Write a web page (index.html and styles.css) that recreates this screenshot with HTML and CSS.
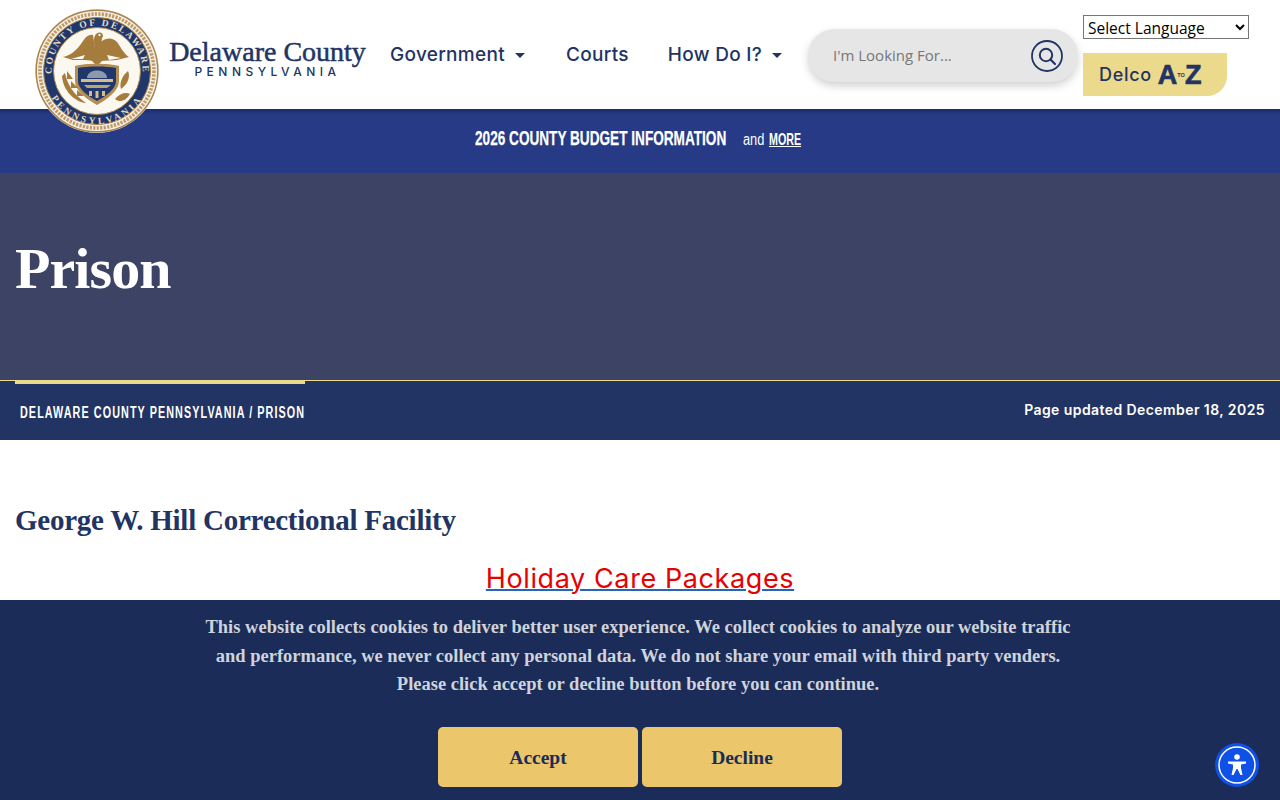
FILE: index.html
```html
<!DOCTYPE html>
<html lang="en">
<head>
<meta charset="utf-8">
<title>Prison - Delaware County</title>
<link rel="stylesheet" href="styles.css">
</head>
<body>
<header class="site-header">
  <a class="brand" href="#">
    <svg class="seal" viewBox="0 0 124 124" aria-hidden="true">
      <defs>
        <path id="sealTop" d="M62 107.500 A45.500 45.500 0 1 1 62.010 107.500"/>
        <path id="sealBottom" d="M62 9 A53 53 0 1 0 62.010 9"/>
      </defs>
      <circle cx="62" cy="62" r="62" fill="#e6e0d6"/>
      <circle cx="62" cy="62" r="60.800" fill="#f5efe3" stroke="#a9824a" stroke-width="1.400"/>
      <circle cx="62" cy="62" r="57" fill="none" stroke="#bd9a66" stroke-width="3.600" stroke-dasharray="2.200 1.300"/>
      <circle cx="62" cy="62" r="53.500" fill="#20376b" stroke="#a9824a" stroke-width="1"/>
      <circle cx="62" cy="62" r="43.500" fill="#fbf8f0" stroke="#a9824a" stroke-width="1"/>
      <text class="seal-text"><textPath href="#sealTop" startOffset="50%" text-anchor="middle">COUNTY OF DELAWARE</textPath></text>
      <text class="seal-text seal-text-low"><textPath href="#sealBottom" startOffset="50%" text-anchor="middle">PENNSYLVANIA</textPath></text>
      <path d="M28 48 C38 46 44 38 48 32 C51 27 55 25 58 26 L60 40 L60 52 L50 51 L38 51 Z" fill="#a67c3c"/>
      <path d="M66 33 C72 28 78 29 82 33 C86 38 88 44 94 48 L82 51 L66 52 Z" fill="#a67c3c"/>
      <path d="M59 31 C59 26 62 23 65 23.500 C68 24 69 27 67 29 L66 40 L66 52 L60 52 Z" fill="#a67c3c"/>
      <path d="M55 50 H69 L62 57 Z" fill="#a67c3c"/>
      <path d="M63.500 25 h2 v2 h-2 z" fill="#fbf8f0"/>
      <path d="M36 50 L50 46 L48 50 Z M72 46 L86 49 L74 51 Z" fill="#fbf8f0"/>
      <path d="M40 57 C50 54 74 54 84 57 L84 72 C84 82 72 90 62 96 C52 90 40 82 40 72 Z" fill="#b48d55"/>
      <path d="M43 59 C52 57 72 57 81 59 L81 72 C81 80 71 87 62 92 C53 87 43 80 43 72 Z" fill="#20376b"/>
      <path d="M52 69 C52 59 72 59 72 69 Z" fill="#8d99ad"/>
      <path d="M46 70 H78 V73 H46 Z" fill="#d3bd8c"/>
      <path d="M49 76 H76 L72 79 H52 Z" fill="#b9a377"/>
      <path d="M54 82 h3 v5 h-3 z M60.500 82 h3 v7 h-3 z M67 82 h3 v5 h-3 z" fill="#d3bd8c"/>
      <path d="M30 64 C32 75 39 86 51 94 C40 93 28 82 27 67 Z M32 62 L38 70 L32 70 Z M36 72 L43 79 L36 79 Z M42 81 L49 87 L42 87 Z" fill="#a67c3c"/>
      <path d="M93 62 C96 68 92 76 86 80 C84 73 88 66 93 62 Z M80 90 C85 84 91 83 95 85 C91 92 85 94 80 90 Z" fill="#a67c3c"/>
    </svg>
    <span class="wordmark">
      <span class="wordmark-name">Delaware County</span>
      <span class="wordmark-state">PENNSYLVANIA</span>
    </span>
  </a>
  <nav class="main-nav">
    <a class="nav-link caret" href="#">Government</a>
    <a class="nav-link nav-link-short" href="#">Courts</a>
    <a class="nav-link caret" href="#">How Do I?</a>
  </nav>
  <form class="search">
    <span class="search-text">I'm Looking For...</span>
    <span class="search-btn">
      <svg viewBox="0 0 32 32" width="32" height="32" aria-hidden="true">
        <circle cx="16" cy="16" r="15" fill="none" stroke="#223463" stroke-width="1.800"/>
        <circle cx="15" cy="15" r="6.200" fill="none" stroke="#223463" stroke-width="2"/>
        <path d="M19.500 19.500 L24 24" stroke="#223463" stroke-width="2.200" stroke-linecap="round"/>
      </svg>
    </span>
  </form>
  <div class="header-side">
    <select class="lang"><option>Select Language</option></select>
    <a class="az" href="#">
      <span class="az-delco">Delco</span>
      <span class="az-mark">A<span class="az-to">TO</span>Z</span>
    </a>
  </div>
</header>

<div class="alert-bar">
  <a class="alert-main" href="#"><span class="sq sq-main">2026 COUNTY BUDGET INFORMATION</span></a>
  <span class="alert-and"><span class="sq sq-and">and</span></span>
  <a class="alert-more" href="#"><span class="sq sq-more">MORE</span></a>
</div>

<section class="hero">
  <h1 class="hero-title">Prison</h1>
</section>

<div class="crumb-bar">
  <div class="crumbs"><span class="sq sq-crumbs">DELAWARE COUNTY PENNSYLVANIA / PRISON</span></div>
  <div class="updated">Page updated December 18, 2025</div>
</div>

<main class="content">
  <h2 class="content-title">George W. Hill Correctional Facility</h2>
  <p class="content-link"><a href="#"><span class="red">Holiday Care Packages</span></a></p>
</main>

<aside class="cookie">
  <p class="cookie-text">This website collects cookies to deliver better user experience. We collect cookies to analyze our website traffic<br>and performance, we never collect any personal data. We do not share your email with third party venders.<br>Please click accept or decline button before you can continue.</p>
  <div class="cookie-actions">
    <button class="cookie-btn" type="button">Accept</button>
    <button class="cookie-btn" type="button">Decline</button>
  </div>
</aside>

<button class="a11y" type="button" aria-label="Accessibility">
  <svg viewBox="0 0 44 44" width="44" height="44" aria-hidden="true">
    <circle cx="22" cy="22" r="18" fill="none" stroke="#fff" stroke-width="1.500"/>
    <circle cx="22" cy="14" r="2.800" fill="#fff"/>
    <path d="M13 18.500 H31 V20.500 L26 21.500 V25 L27.500 32 H25.500 L22.500 26 H21.500 L18.500 32 H16.500 L18 25 V21.500 L13 20.500 Z" fill="#fff"/>
  </svg>
</button>
</body>
</html>
```

FILE: styles.css
```css
* { box-sizing: border-box; }
html, body { margin: 0; padding: 0; }
body { font-family: Inter, "Liberation Sans", sans-serif; background: #fff; color: #223463; height: 800px; overflow: hidden; }
a { color: inherit; text-decoration: none; }

/* Condensed display type: no condensed family is installed, so the glyphs are narrowed */
.sq { display: inline-block; font-family: "Liberation Sans", sans-serif; white-space: nowrap; transform-origin: left center; }
.sq-main { font-size: 21px; font-weight: 700; transform: scaleX(.648); -webkit-text-stroke: 0.250px #fff; }
.sq-and { font-size: 16px; transform: scaleX(.8); }
.sq-more { font-size: 17px; font-weight: 700; text-decoration: underline; transform: scaleX(.63); }
.sq-crumbs { font-size: 16px; font-weight: 700; letter-spacing: 1.600px; transform: scaleX(.674); }

.site-header { position: relative; z-index: 2; height: 109px; display: flex; background: #fff; }
.brand { width: 380px; flex: none; display: block; position: relative; }
.seal { position: absolute; left: 35px; top: 9px; width: 124px; height: 124px; z-index: 3; }
.seal-text { font-family: "Liberation Serif", serif; font-size: 9.500px; font-weight: 700; letter-spacing: 2px; fill: #e3d9c0; }
.seal-text-low { letter-spacing: 3px; }
.wordmark { position: absolute; left: 169px; top: 37px; width: 197px; display: flex; flex-direction: column; align-items: center; }
.wordmark-name { font-family: "Liberation Serif", serif; font-size: 28px; line-height: 30px; font-weight: 400; color: #223463; white-space: nowrap; -webkit-text-stroke: 0.500px #223463; }
.wordmark-state { font-size: 12px; line-height: 10px; font-weight: 500; letter-spacing: 4.500px; color: #223463; }

.main-nav { width: 428px; flex: none; display: flex; align-items: flex-start; padding-left: 10px; padding-top: 43px; }
.nav-link { font-size: 19px; line-height: 24px; font-weight: 500; color: #223463; margin-right: 41px; white-space: nowrap; letter-spacing: 0.300px; }
.nav-link-short { margin-right: 39px; }
.caret::after { content: ""; display: inline-block; margin-left: 10px; vertical-align: 3px; border-top: 5px solid #223463; border-left: 5px solid transparent; border-right: 5px solid transparent; }

.search { flex: none; width: 270px; height: 53px; margin-top: 29px; border-radius: 27px; background: #e6e6e6; box-shadow: 0 4px 8px rgba(0,0,0,.18); display: flex; align-items: center; justify-content: space-between; padding: 0 15px 0 25px; }
.search-text { font-family: "Open Sans", sans-serif; font-size: 15px; color: #777; margin-bottom: 2px; }
.search-btn { display: flex; }

.header-side { flex: none; width: 170px; margin-left: 5px; padding-top: 15px; display: flex; flex-direction: column; align-items: flex-start; }
.lang { width: 166px; height: 24px; font-family: "Open Sans", sans-serif; font-size: 15.500px; background: #fff; color: #000; border: 1px solid #767676; padding: 0; }
.az { width: 144px; height: 43px; margin-top: 14px; background: #ecda8c; border-bottom-right-radius: 20px; display: flex; align-items: center; padding-left: 16px; gap: 6px; }
.az-delco { font-size: 18px; font-weight: 500; letter-spacing: 0.700px; color: #223463; }
.az-mark { font-family: "Liberation Sans", sans-serif; font-size: 27px; line-height: 30px; font-weight: 700; color: #223463; display: flex; align-items: center; -webkit-text-stroke: 0.700px #223463; }
.az-to { font-size: 5.500px; line-height: 8px; -webkit-text-stroke: 0; color: #223463; }

.alert-bar { height: 64px; background: linear-gradient(#1c2c66, #263a85 5px); color: #fff; display: flex; align-items: center; justify-content: center; padding: 0 4px 6px 0; }
.alert-main { width: 251px; flex: none; }
.alert-and { width: 21px; flex: none; margin-left: 17px; margin-top: 2px; }
.alert-more { width: 32px; flex: none; margin-left: 5px; margin-top: 2px; }

.hero { height: 207px; background: #3c4365; padding: 60px 15px 0; }
.hero-title { margin: 0; font-family: "Liberation Serif", serif; font-size: 58px; line-height: 72px; font-weight: 700; color: #fff; letter-spacing: -0.900px; }

.crumb-bar { height: 60px; background: #223463; border-top: 1px solid #ecda8c; display: flex; justify-content: space-between; padding: 0 15px; color: #fff; }
.crumbs { margin-top: -1px; height: 61px; border-top: 4px solid #ecda8c; width: 290px; padding: 19px 0 0 5px; line-height: 18px; }
.updated { font-size: 14px; line-height: 18px; font-weight: 600; letter-spacing: 0.420px; padding-top: 20px; }

.content { padding: 60px 15px 0; }
.content-title { margin: 0; font-family: "Liberation Serif", serif; font-size: 29px; line-height: 40px; font-weight: 700; color: #223463; letter-spacing: -0.250px; }
.content-link { margin: 19px 0 0; text-align: center; font-size: 27px; line-height: 40px; letter-spacing: 0.600px; }
.content-link a { color: #2a62bd; text-decoration: underline; text-decoration-thickness: 2px; }
.red { color: #e60000; }

.cookie { position: fixed; left: 0; right: 0; bottom: 0; height: 200px; z-index: 4; background: #1a2c57; color: #cfd3dc; text-align: center; padding-top: 13px; }
.cookie-text { margin: 0; padding-right: 4px; font-family: "Liberation Serif", serif; font-size: 18.500px; line-height: 28.500px; font-weight: 700; }
.cookie-actions { display: flex; justify-content: center; gap: 4px; margin-top: 28px; }
.cookie-btn { width: 200px; height: 60px; border: 0; border-radius: 5px; background: #ecc66b; color: #1a2c57; font-family: "Liberation Serif", serif; font-size: 19.500px; font-weight: 700; padding: 2px 0 0; }

.a11y { position: fixed; z-index: 5; left: 1215px; top: 743px; width: 44px; height: 44px; padding: 0; border: 0; border-radius: 50%; background: #0f50e6; display: flex; }
```
